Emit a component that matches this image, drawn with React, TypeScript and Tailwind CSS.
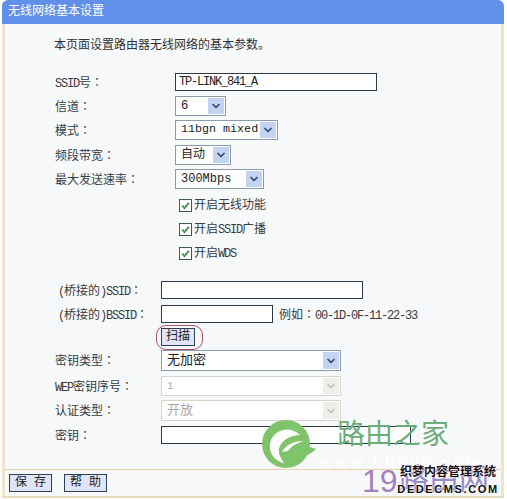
import { ChevronDown } from "lucide-react";

const font = { fontFamily: '"Liberation Mono", "Noto Sans CJK SC", monospace' };

// the router page mixes half width latin (about 6px a char) with 12px hanzi
function Mixed({ text }: { text: string }) {
  return (
    <>
      {text.split(/([\x20-\x7e]+|：)/).map((part, i) => {
        if (part === "：") {
          return (
            <span key={i} style={{ fontFamily: '"Noto Sans CJK TC", monospace' }}>
              ：
            </span>
          );
        }
        if (/^[\x20-\x7e]+$/.test(part)) {
          return (
            <span key={i} className="tracking-[-1.2px]">
              {part}
            </span>
          );
        }
        return <span key={i}>{part}</span>;
      })}
    </>
  );
}

function Label({ text, w = "w-[120px]" }: { text: string; w?: string }) {
  return (
    <div className={`${w} shrink-0 pt-px text-[12px] text-[#3a3d42]`}>
      <Mixed text={text} />
    </div>
  );
}

function TextBox({ value, w }: { value?: string; w: string }) {
  return (
    <div
      className={`${w} flex h-[18px] items-center border border-[#2c3a48] bg-white px-[3px] text-[12px] tracking-[-1.2px] text-[#222]`}
    >
      {value}
    </div>
  );
}

function Select({
  value,
  w,
  h = "h-5",
  size = "text-[12px]",
  disabled = false,
}: {
  value: string;
  w: string;
  h?: string;
  size?: string;
  disabled?: boolean;
}) {
  return (
    <div
      className={`${w} ${h} ${size} flex items-center justify-between border bg-white pl-[5px] pr-px ${
        disabled ? "border-[#d6d5c8] text-[#a9a9a9]" : "border-[#8a9bad] text-[#222]"
      }`}
    >
      <span className="whitespace-nowrap">{value}</span>
      <span
        className={`flex h-[calc(100%-2px)] w-4 shrink-0 items-center justify-center ${
          disabled ? "bg-[#eeeeea] text-[#c4c4bc]" : "bg-[#c3d3f0] text-[#34477e]"
        }`}
      >
        <ChevronDown size={12} strokeWidth={3.5} />
      </span>
    </div>
  );
}

function Row({ children, className = "h-6" }: { children: React.ReactNode; className?: string }) {
  return <div className={`flex items-center ${className}`}>{children}</div>;
}

function Check({ label }: { label: string }) {
  return (
    <Row>
      <div className="ml-[124px] flex items-center gap-[2px] text-[12px] text-[#3a3d42]">
        <span className="flex h-[13px] w-[13px] items-center justify-center border border-[#3d5a56] bg-white">
          <svg viewBox="0 0 12 12" className="h-[11px] w-[11px]">
            <path d="M2.5 6 L5 8.8 L9.6 3" fill="none" stroke="#5c9a62" strokeWidth="2.2" />
          </svg>
        </span>
        <span className="pt-[2px]">
          <Mixed text={label} />
        </span>
      </div>
    </Row>
  );
}

function Btn({ children, w }: { children: React.ReactNode; w: string }) {
  return (
    <div className={`${w} flex h-[18px] items-center justify-center border border-[#2f3f55] bg-[#dfe4f6] text-[12px] text-[#222]`}>
      {children}
    </div>
  );
}

function Watermark() {
  return (
    <div className="absolute left-[262px] top-[420px] h-[79px] w-[245px]">
      <svg viewBox="0 0 54 48" className="h-12 w-[54px]">
        <circle cx="24" cy="24" r="24" fill="#7fc46a" />
        <path
          d="M38 15 C30 6 14 8 9 20 C5 31 12 41 22 43 C18 37 16 32 17 28 C20 20 29 15 38 15 Z"
          fill="#fdfefc"
        />
        <path d="M20 32 C24 24 33 21 42 21 C36 23 30 25 26 31 Z" fill="#fdfefc" />
        <path d="M24 33 C32 25 44 25 54 29 C46 37 36 39 26 36 Z" fill="#7fc46a" />
      </svg>
      <div className="absolute left-[75px] top-[1px] text-[28px] leading-[32px] text-[#6aad79]">路由之家</div>
      <div
        className="absolute left-[58px] top-[30px] text-[17px] tracking-[3px] text-white"
        style={{ fontFamily: '"Liberation Sans", sans-serif' }}
      >
        www.hhbyh.com
      </div>
      <div
        className="absolute left-[100px] top-[44px] text-[32px] leading-[34px] text-[#a581bd]"
        style={{ fontFamily: '"Liberation Sans", sans-serif' }}
      >
        19
      </div>
      <div className="absolute left-[137px] top-[46px] whitespace-nowrap text-[30px] leading-[30px] text-[#9a8ccb]">
        路由网
      </div>
      <div className="absolute left-[136px] top-[46px] flex w-[100px] flex-col items-center">
        <span className="whitespace-nowrap text-[12px] font-bold leading-[15px] text-[#1a1015] [text-shadow:0_0_2px_#fff,0_0_2px_#fff]">
          织梦内容管理系统
        </span>
        <span
          className="whitespace-nowrap text-[11px] font-bold leading-[16px] tracking-[1.6px] text-[#111] [text-shadow:0_0_2px_#fff,0_0_2px_#fff]"
          style={{ fontFamily: '"Liberation Sans", sans-serif' }}
        >
          DEDECMS.COM
        </span>
      </div>
    </div>
  );
}

export default function App() {
  return (
    <div className="relative h-[499px] w-[507px] overflow-hidden bg-white" style={font}>
      <div className="mx-[2px] flex h-[498px] w-[502px] flex-col border-b-2 border-[#e8dcc0]">
        <div className="flex h-[24px] shrink-0 items-center rounded-t-md bg-[#6190ea] pl-[6px] text-[12px] text-white">
          无线网络基本设置
        </div>
        <div className="flex flex-1 flex-col border-x-[3px] border-[#f0e4cc] bg-[#f6f8fa]">
          <div className="flex h-[446px] flex-col border-b border-[#eccfae] pl-[50px]">
            <div className="-ml-px mt-[12px] flex h-5 items-center text-[12px] text-[#333]">
              本页面设置路由器无线网络的基本参数。
            </div>
            <Row className="mt-[14px] h-6">
              <Label text="SSID号：" />
              <TextBox value="TP-LINK_841_A" w="w-[202px]" />
            </Row>
            <Row>
              <Label text="信道：" />
              <Select value="6" w="w-[51px]" />
            </Row>
            <Row>
              <Label text="模式：" />
              <Select value="11bgn mixed" w="w-[103px]" size="text-[11.7px]" />
            </Row>
            <Row className="mt-px h-6">
              <Label text="频段带宽：" />
              <Select value="自动" w="w-[56px]" />
            </Row>
            <Row>
              <Label text="最大发送速率：" />
              <Select value="300Mbps" w="w-[89px]" />
            </Row>
            <div className="mt-[2px]">
              <Check label="开启无线功能" />
              <Check label="开启SSID广播" />
              <Check label="开启WDS" />
            </div>
            <Row className="mt-[13px] h-6">
              <Label text="(桥接的)SSID：" w="w-[106px] pl-[3px]" />
              <TextBox w="w-[202px]" />
            </Row>
            <Row>
              <Label text="(桥接的)BSSID：" w="w-[106px] pl-[3px]" />
              <TextBox w="w-[112px]" />
              <span className="ml-[6px] pt-px text-[12px] text-[#3a3d42]">
                <Mixed text="例如：00-1D-0F-11-22-33" />
              </span>
            </Row>
            <Row className="h-[22px]">
              <div className="ml-[101px] flex h-[25px] w-[47px] items-center rounded-[10px] border border-[#a8536a] pl-[4px]">
                <Btn w="w-[34px]">扫描</Btn>
              </div>
            </Row>
            <Row className="mt-px h-[23px]">
              <Label text="密钥类型：" w="w-[106px]" />
              <Select value="无加密" w="w-[180px]" h="h-[21px]" size="text-[13px]" />
            </Row>
            <Row className="mt-[2px] h-6">
              <Label text="WEP密钥序号：" w="w-[106px]" />
              <Select value="1" w="w-[180px]" h="h-[20px]" size="text-[11px]" disabled />
            </Row>
            <Row className="mt-px h-[23px]">
              <Label text="认证类型：" w="w-[106px]" />
              <Select value="开放" w="w-[180px]" h="h-[21px]" size="text-[13px]" disabled />
            </Row>
            <Row className="mt-px h-6">
              <Label text="密钥：" w="w-[106px]" />
              <TextBox w="w-[250px]" />
            </Row>
          </div>
          <div className="flex flex-1 items-center gap-3 pl-[4px]">
            <Btn w="w-[43px]">保 存</Btn>
            <Btn w="w-[43px]">帮 助</Btn>
          </div>
        </div>
      </div>
      <Watermark />
    </div>
  );
}
